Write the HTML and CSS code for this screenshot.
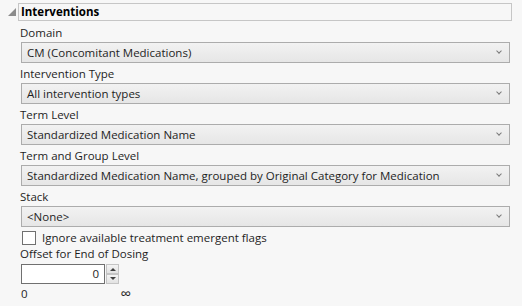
FILE: index.html
```html
<!DOCTYPE html>
<html lang="en">
  <head>
    <meta charset="UTF-8" />
    <title>Interventions</title>
    <link rel="stylesheet" href="styles.css">
  </head>
  <body>
    <div class="panel">
      <!-- Outline header -->
      <div class="panel-head">
        <span class="disclosure"></span>
        <div class="panel-title">Interventions</div>
      </div>

      <div class="panel-body">
        <label class="field-label">Domain</label>
        <div class="combo"><span>CM (Concomitant Medications)</span><span class="chev"></span></div>

        <label class="field-label">Intervention Type</label>
        <div class="combo"><span>All intervention types</span><span class="chev"></span></div>

        <label class="field-label">Term Level</label>
        <div class="combo"><span>Standardized Medication Name</span><span class="chev"></span></div>

        <label class="field-label">Term and Group Level</label>
        <div class="combo"><span>Standardized Medication Name, grouped by Original Category for Medication</span><span class="chev"></span></div>

        <label class="field-label">Stack</label>
        <div class="combo"><span>&lt;None&gt;</span><span class="chev"></span></div>

        <div class="check-row">
          <span class="checkbox"></span>
          <span>Ignore available treatment emergent flags</span>
        </div>

        <label class="field-label">Offset for End of Dosing</label>
        <div class="number-row">
          <div class="number-box">0</div>
          <div class="spinner">
            <span class="spin-up"></span>
            <span class="spin-down"></span>
          </div>
        </div>
        <div class="range-row">
          <span>0</span>
          <span class="infinity">&infin;</span>
        </div>
      </div>
    </div>
  </body>
</html>
```

FILE: styles.css
```css
body {
  margin: 0;
  background-color: #f7f7f7;
  font-family: "Open Sans", "Noto Sans", sans-serif;
  font-size: 11.5px;
  color: #1e1e1e;
}
.panel {
  width: 522px;
  height: 306px;
  overflow: hidden;
}
.panel-head {
  display: flex;
  align-items: flex-start;
  padding: 3px 10px 0 8px;
}
.disclosure {
  width: 0;
  height: 0;
  margin-top: 5px;
  margin-right: 2px;
  border-left: 8px solid transparent;
  border-bottom: 8px solid #8c8c8c;
}
.panel-title {
  flex: 1;
  height: 16px;
  border: 1px solid #c6c6c6;
  padding-left: 2px;
  font-weight: bold;
  font-size: 11.5px;
  line-height: 16px;
  color: #000;
}
.panel-body {
  display: flex;
  flex-direction: column;
  padding: 4px 12px 0 21px;
}
.field-label {
  display: block;
  height: 17px;
  line-height: 16px;
  margin-left: -1px;
}
.combo {
  display: flex;
  align-items: center;
  justify-content: space-between;
  height: 19px;
  margin-bottom: 3px;
  border: 1px solid #acacac;
  padding: 0 8px 0 5px;
  background: linear-gradient(#f2f2f2, #e6e6e6);
  line-height: 19px;
}
.chev {
  width: 3px;
  height: 3px;
  margin-top: -3px;
  border-right: 1.5px solid #7a7a7a;
  border-bottom: 1.5px solid #7a7a7a;
  transform: rotate(45deg);
}
.check-row {
  display: flex;
  align-items: center;
  height: 17px;
  margin-top: -1px;
}
.checkbox {
  width: 12px;
  height: 12px;
  margin-left: 1px;
  margin-right: 6px;
  border: 1px solid #707070;
  background-color: #fff;
}
.number-row {
  display: flex;
  height: 20px;
  margin-top: 1px;
}
.number-box {
  width: 77px;
  height: 18px;
  border: 1px solid #707070;
  background-color: #fff;
  padding-right: 5px;
  text-align: right;
  line-height: 18px;
}
.spinner {
  display: flex;
  flex-direction: column;
  width: 13px;
  margin-left: 1px;
}
.spin-up,
.spin-down {
  flex: 1;
  position: relative;
  background: linear-gradient(#f4f4f4, #e2e2e2);
  border: 1px solid #c4c4c4;
}
.spin-up::after,
.spin-down::after {
  content: "";
  position: absolute;
  left: 3px;
  top: 3px;
  border-left: 3px solid transparent;
  border-right: 3px solid transparent;
}
.spin-up::after {
  border-bottom: 3px solid #404040;
}
.spin-down::after {
  top: 2px;
  border-top: 3px solid #404040;
}
.range-row {
  display: flex;
  justify-content: space-between;
  align-items: center;
  width: 110px;
  height: 17px;
  margin-top: 1px;
  line-height: 17px;
}
.infinity {
  font-size: 15px;
}
```
